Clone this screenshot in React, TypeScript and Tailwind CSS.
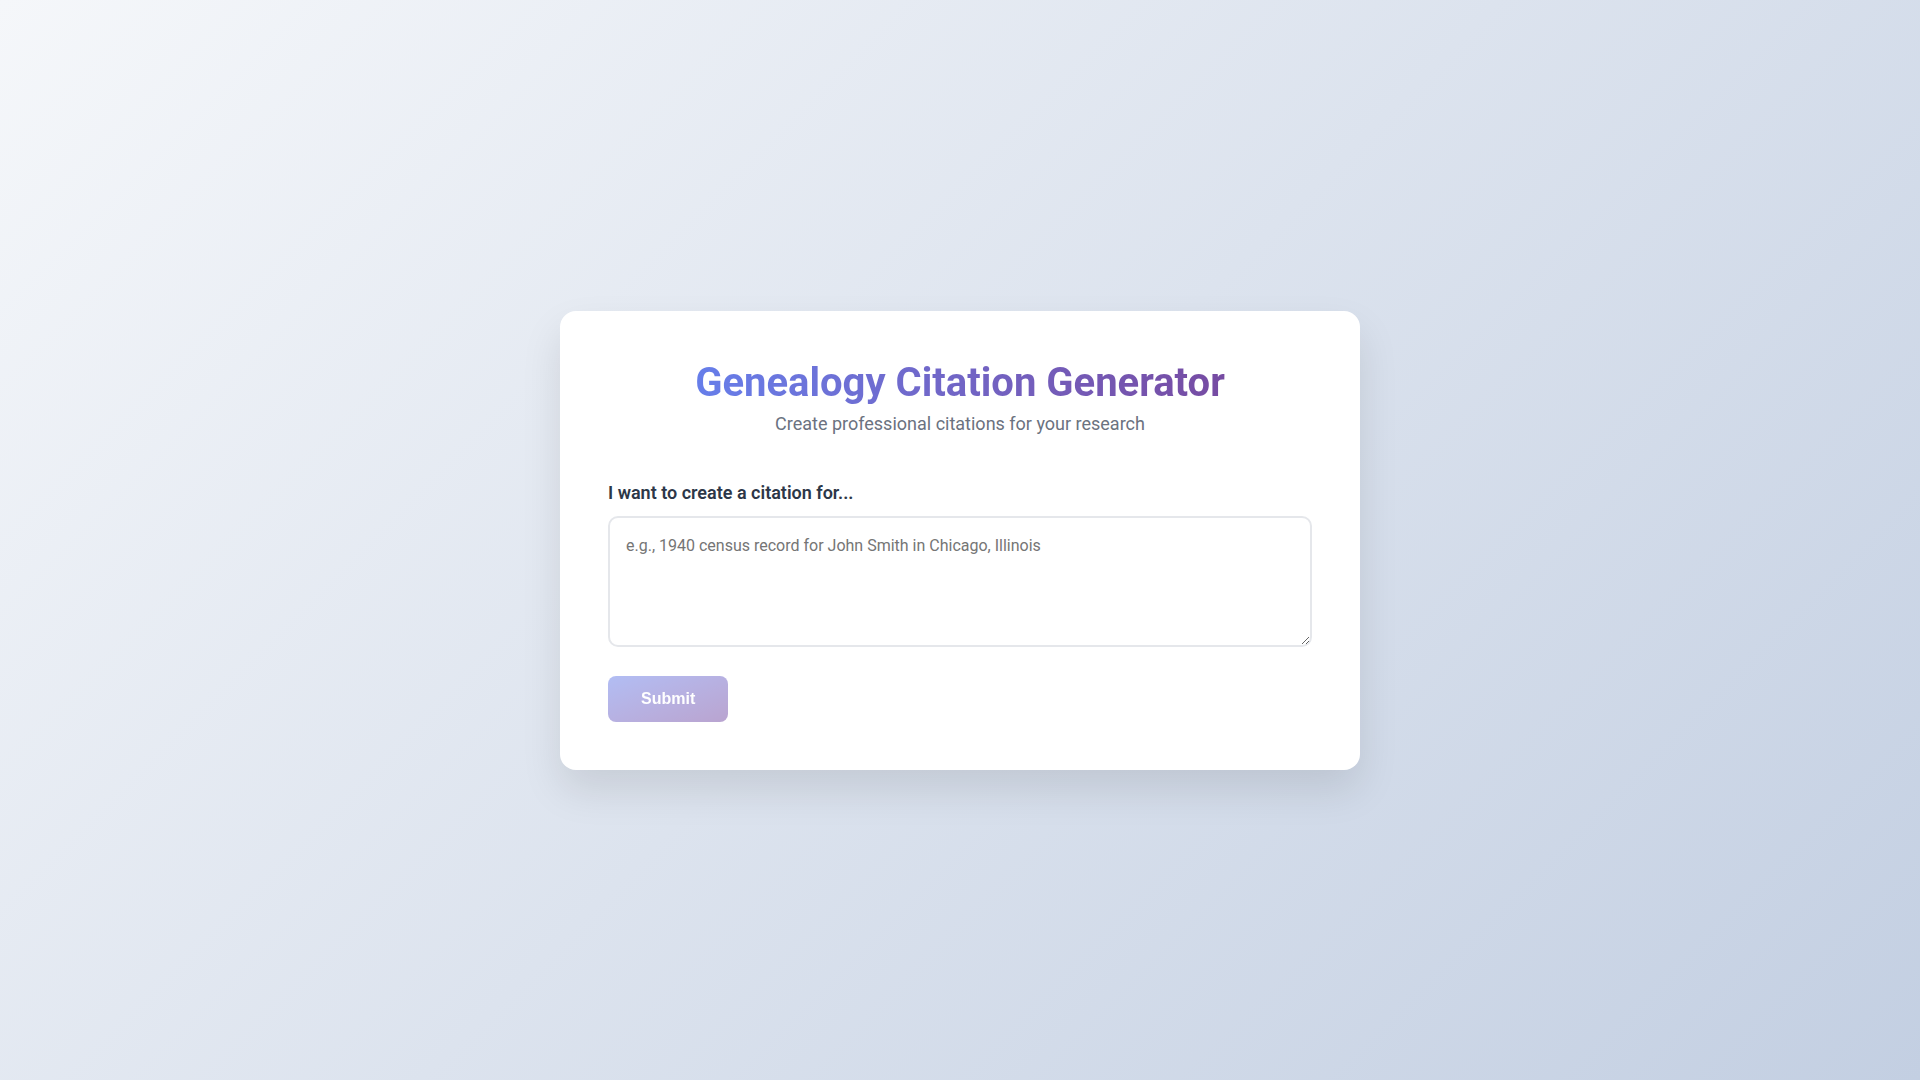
import { useState } from 'react';

export default function App() {
  const [query, setQuery] = useState('');

  return (
    <div className="min-h-screen w-full flex items-center justify-center bg-[linear-gradient(135deg,#f5f7fa_0%,#c3cfe2_100%)] font-['Roboto',sans-serif]">
      <div className="w-[800px] bg-white rounded-2xl p-12 shadow-[0_20px_40px_rgba(0,0,0,0.1)]">
        {/* Header */}
        <div className="text-center mb-[41px]">
          <h1 className="text-[40px] font-bold leading-[48px] bg-gradient-to-r from-[#667eea] to-[#764ba2] bg-clip-text text-transparent inline-block">
            Genealogy Citation Generator
          </h1>
          <p className="mt-[3px] text-lg leading-7 text-[#6b7280]">Create professional citations for your research</p>
        </div>

        {/* Form */}
        <label htmlFor="citation" className="block mb-2.5 text-lg leading-[27px] font-semibold text-[#2d3748]">
          I want to create a citation for...
        </label>
        <textarea
          id="citation"
          value={query}
          onChange={(e) => setQuery(e.target.value)}
          placeholder="e.g., 1940 census record for John Smith in Chicago, Illinois"
          className="block w-full h-[131px] p-4 text-base leading-6 text-[#2d3748] border-2 border-[#e5e7eb] rounded-[10px] outline-none placeholder:text-[#757575] font-['Roboto',sans-serif]"
        />
        <button
          disabled={!query.trim()}
          className="mt-[29px] px-[33px] py-3 rounded-lg text-white text-base font-bold leading-[22px] bg-gradient-to-br from-[#667eea] to-[#764ba2] disabled:opacity-50 font-['Liberation_Sans',Arial,sans-serif]"
        >
          Submit
        </button>
      </div>
    </div>
  );
}
